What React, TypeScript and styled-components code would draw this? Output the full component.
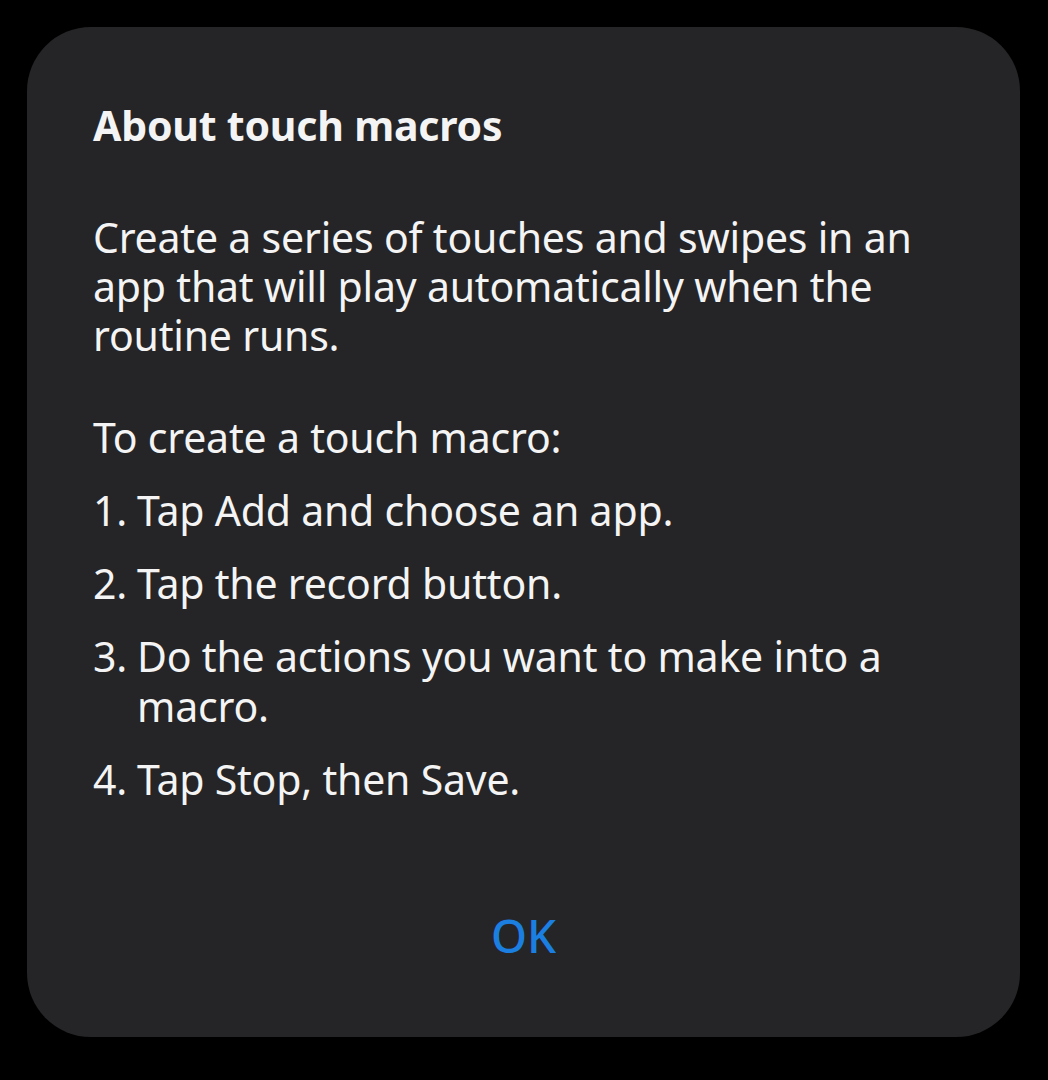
import { createGlobalStyle, styled } from "styled-components";

const GlobalStyle = createGlobalStyle`
  html, body {
    margin: 0;
    padding: 0;
    background: #000000;
  }
  body {
    font-family: "Noto Sans", "Open Sans", sans-serif;
    -webkit-font-smoothing: antialiased;
  }
`;

const Screen = styled.div`
  width: 1048px;
  height: 1080px;
  background: #000000;
  padding: 27px 28px 43px 27px;
  box-sizing: border-box;
  display: flex;
`;

const Dialog = styled.div`
  flex: 1;
  background: #252527;
  border-radius: 64px;
  padding: 72px 66px 0 66px;
  display: flex;
  flex-direction: column;
  color: #f4f4f4;
`;

const Title = styled.h1`
  margin: 0;
  font-size: 41px;
  font-weight: 700;
  line-height: 52px;
  letter-spacing: -0.2px;
`;

const Paragraph = styled.p<{ $gap?: number }>`
  margin: ${(p) => p.$gap ?? 0}px 0 0 0;
  font-size: 41px;
  font-weight: 400;
  line-height: 49px;
  letter-spacing: -0.2px;
`;

const Steps = styled.ol`
  list-style: none;
  margin: 23px 0 0 0;
  padding: 0;
  display: flex;
  flex-direction: column;
  gap: 23px;
`;

const Step = styled.li`
  display: grid;
  grid-template-columns: auto 1fr;
  font-size: 41px;
  line-height: 50px;
  letter-spacing: -0.2px;
`;

const StepNumber = styled.span`
  padding-right: 10px;
`;

const Actions = styled.div`
  margin-top: auto;
  padding-bottom: 72px;
  display: flex;
  justify-content: center;
`;

const OkButton = styled.button`
  background: none;
  border: none;
  padding: 0;
  font-family: inherit;
  font-size: 46px;
  font-weight: 500;
  line-height: 60px;
  color: #1b7fe2;
  cursor: pointer;
`;

const steps = [
  "Tap Add and choose an app.",
  "Tap the record button.",
  "Do the actions you want to make into a macro.",
  "Tap Stop, then Save.",
];

export default function App() {
  return (
    <Screen>
      <GlobalStyle />
      <Dialog>
        <Title>About touch macros</Title>
        <Paragraph $gap={62}>
          Create a series of touches and swipes in an app that will play
          automatically when the routine runs.
        </Paragraph>
        <Paragraph $gap={53}>To create a touch macro:</Paragraph>
        <Steps>
          {steps.map((text, i) => (
            <Step key={i}>
              <StepNumber>{i + 1}.</StepNumber>
              <span>{text}</span>
            </Step>
          ))}
        </Steps>
        <Actions>
          <OkButton>OK</OkButton>
        </Actions>
      </Dialog>
    </Screen>
  );
}
